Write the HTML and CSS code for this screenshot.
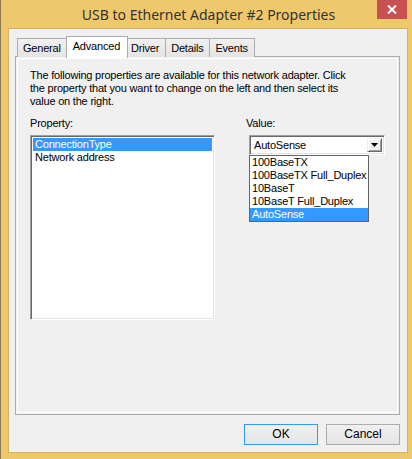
FILE: index.html
```
<!DOCTYPE html>
<html>
<head>
<meta charset="utf-8">
<link rel="stylesheet" href="styles.css">
</head>
<body>
<div class="window">
  <div class="titlebar">
    <div class="title">USB to Ethernet Adapter #2 Properties</div>
    <div class="close"><svg width="10" height="9" viewBox="0 0 10 9"><path d="M1 0.5 L9 8.5 M9 0.5 L1 8.5" stroke="#fff" stroke-width="2" fill="none"/></svg></div>
  </div>
  <div class="client">
    <div class="tabs">
      <div class="tab first">General</div>
      <div class="tab active">Advanced</div>
      <div class="tab">Driver</div>
      <div class="tab">Details</div>
      <div class="tab">Events</div>
    </div>
    <div class="panel">
      <div class="page">
        <p class="desc">The following properties are available for this network adapter. Click<br>the property that you want to change on the left and then select its<br>value on the right.</p>
        <div class="cols">
          <div class="col-left">
            <div class="label">Property:</div>
            <div class="listbox">
              <div class="item sel">ConnectionType</div>
              <div class="item">Network address</div>
            </div>
          </div>
          <div class="col-right">
            <div class="label">Value:</div>
            <div class="combo-wrap">
              <div class="combo">
                <div class="combo-text">AutoSense</div>
                <div class="combo-btn"><svg width="7" height="4" viewBox="0 0 7 4"><path d="M0 0 H7 L3.5 4 Z" fill="#000"/></svg></div>
              </div>
              <div class="droplist">
                <div class="ditem">100BaseTX</div>
                <div class="ditem">100BaseTX Full_Duplex</div>
                <div class="ditem">10BaseT</div>
                <div class="ditem">10BaseT Full_Duplex</div>
                <div class="ditem sel">AutoSense</div>
              </div>
            </div>
          </div>
        </div>
      </div>
    </div>
    <div class="buttons">
      <div class="btn default">OK</div>
      <div class="btn">Cancel</div>
    </div>
  </div>
</div>
</body>
</html>
```
FILE: styles.css
```
html, body {
  margin: 0;
  padding: 0;
}
body {
  width: 412px;
  height: 459px;
  overflow: hidden;
  background: #f0c86c;
  font-family: "Liberation Sans", Arial, sans-serif;
  font-size: 11px;
  letter-spacing: -0.2px;
  color: #000;
}
.window {
  width: 412px;
  height: 459px;
  display: flex;
  flex-direction: column;
  border-left: 1px solid #8c7a58;
  box-sizing: border-box;
}
.titlebar {
  height: 28px;
  position: relative;
  flex: none;
}
.title {
  text-align: center;
  font-family: "Noto Sans", "Open Sans", sans-serif;
  font-size: 14px;
  letter-spacing: 0;
  line-height: 29px;
  color: #333;
  padding-left: 4px;
}
.close {
  position: absolute;
  top: 0;
  right: 5px;
  width: 30px;
  height: 19px;
  background: #c75050;
  display: flex;
  align-items: center;
  justify-content: center;
}
.client {
  margin: 0 4px 6px 7px;
  flex: 1;
  background: #f0f0f0;
  border: 1px solid #d6b263;
  display: flex;
  flex-direction: column;
  padding: 7px 7px 0 6px;
}
.tabs {
  display: flex;
  height: 21px;
  align-items: flex-end;
  padding-left: 2px;
  position: relative;
  z-index: 1;
}
.tab {
  height: 19px;
  box-sizing: border-box;
  border: 1px solid #acacac;
  border-bottom: none;
  background: linear-gradient(#f0f0f0, #e5e5e5);
  padding: 0 6px 0 5px;
  line-height: 18px;
  margin-left: -1px;
}
.tab.first {
  margin-left: 0;
}
.tab.active {
  height: 22px;
  background: #fff;
  margin: 0 -2px 0 -2px;
  padding: 0 7px 0 6px;
  line-height: 18px;
  position: relative;
  z-index: 2;
  margin-bottom: -1px;
}
.panel {
  width: 385px;
  height: 359px;
  box-sizing: border-box;
  border: 1px solid #acacac;
  margin-top: -1px;
  padding: 1px;
}
.page {
  height: 100%;
  box-sizing: border-box;
  border: 1px solid #fff;
  padding: 10px 0 0 12px;
}
.desc {
  margin: 0;
  line-height: 13px;
}
.cols {
  display: flex;
  margin-top: 9px;
}
.col-left {
  width: 185px;
}
.col-right {
  margin-left: 31px;
  width: 139px;
}
.label {
  line-height: 13px;
  height: 13px;
}
.listbox {
  margin-top: 5px;
  width: 185px;
  height: 185px;
  box-sizing: border-box;
  background: #fff;
  border: 1px solid;
  border-color: #a0a0a0 #fff #fff #a0a0a0;
  box-shadow: inset 1px 1px 0 #696969, inset -1px -1px 0 #e3e3e3;
  padding: 2px 2px;
}
.item {
  height: 13px;
  line-height: 13px;
  padding-left: 2px;
  white-space: nowrap;
}
.item.sel {
  background: #3399ff;
  color: #fff;
}
.combo-wrap {
  margin-top: 5px;
  margin-left: 3px;
  position: relative;
}
.combo {
  width: 136px;
  height: 20px;
  box-sizing: border-box;
  background: #fff;
  border: 1px solid;
  border-color: #a0a0a0 #fff #fff #a0a0a0;
  box-shadow: inset 1px 1px 0 #696969, inset -1px -1px 0 #e3e3e3;
  display: flex;
  align-items: stretch;
  padding: 2px 2px 2px 2px;
}
.combo-text {
  flex: 1;
  line-height: 14px;
  padding-left: 2px;
}
.combo-btn {
  width: 15px;
  box-sizing: border-box;
  background: #f0f0f0;
  border: 1px solid;
  border-color: #f0f0f0 #696969 #696969 #f0f0f0;
  box-shadow: inset 1px 1px 0 #fff, inset -1px -1px 0 #a0a0a0;
  display: flex;
  align-items: center;
  justify-content: center;
}
.droplist {
  position: absolute;
  left: 0;
  top: 20px;
  width: 120px;
  box-sizing: border-box;
  background: #fff;
  border: 1px solid #646464;
}
.ditem {
  height: 13px;
  line-height: 13px;
  padding-left: 2px;
  white-space: nowrap;
}
.ditem.sel {
  background: #3399ff;
  color: #fff;
}
.buttons {
  display: flex;
  justify-content: flex-end;
  gap: 8px;
  margin-top: 9px;
  padding-right: 0;
}
.btn {
  width: 74px;
  height: 21px;
  box-sizing: border-box;
  border: 1px solid #acacac;
  background: linear-gradient(#f0f0f0, #e5e5e5);
  text-align: center;
  line-height: 19px;
  font-family: "Liberation Sans", Arial, sans-serif;
  font-size: 12px;
  letter-spacing: 0;
}
.btn.default {
  border-color: #3399ff;
}
```
